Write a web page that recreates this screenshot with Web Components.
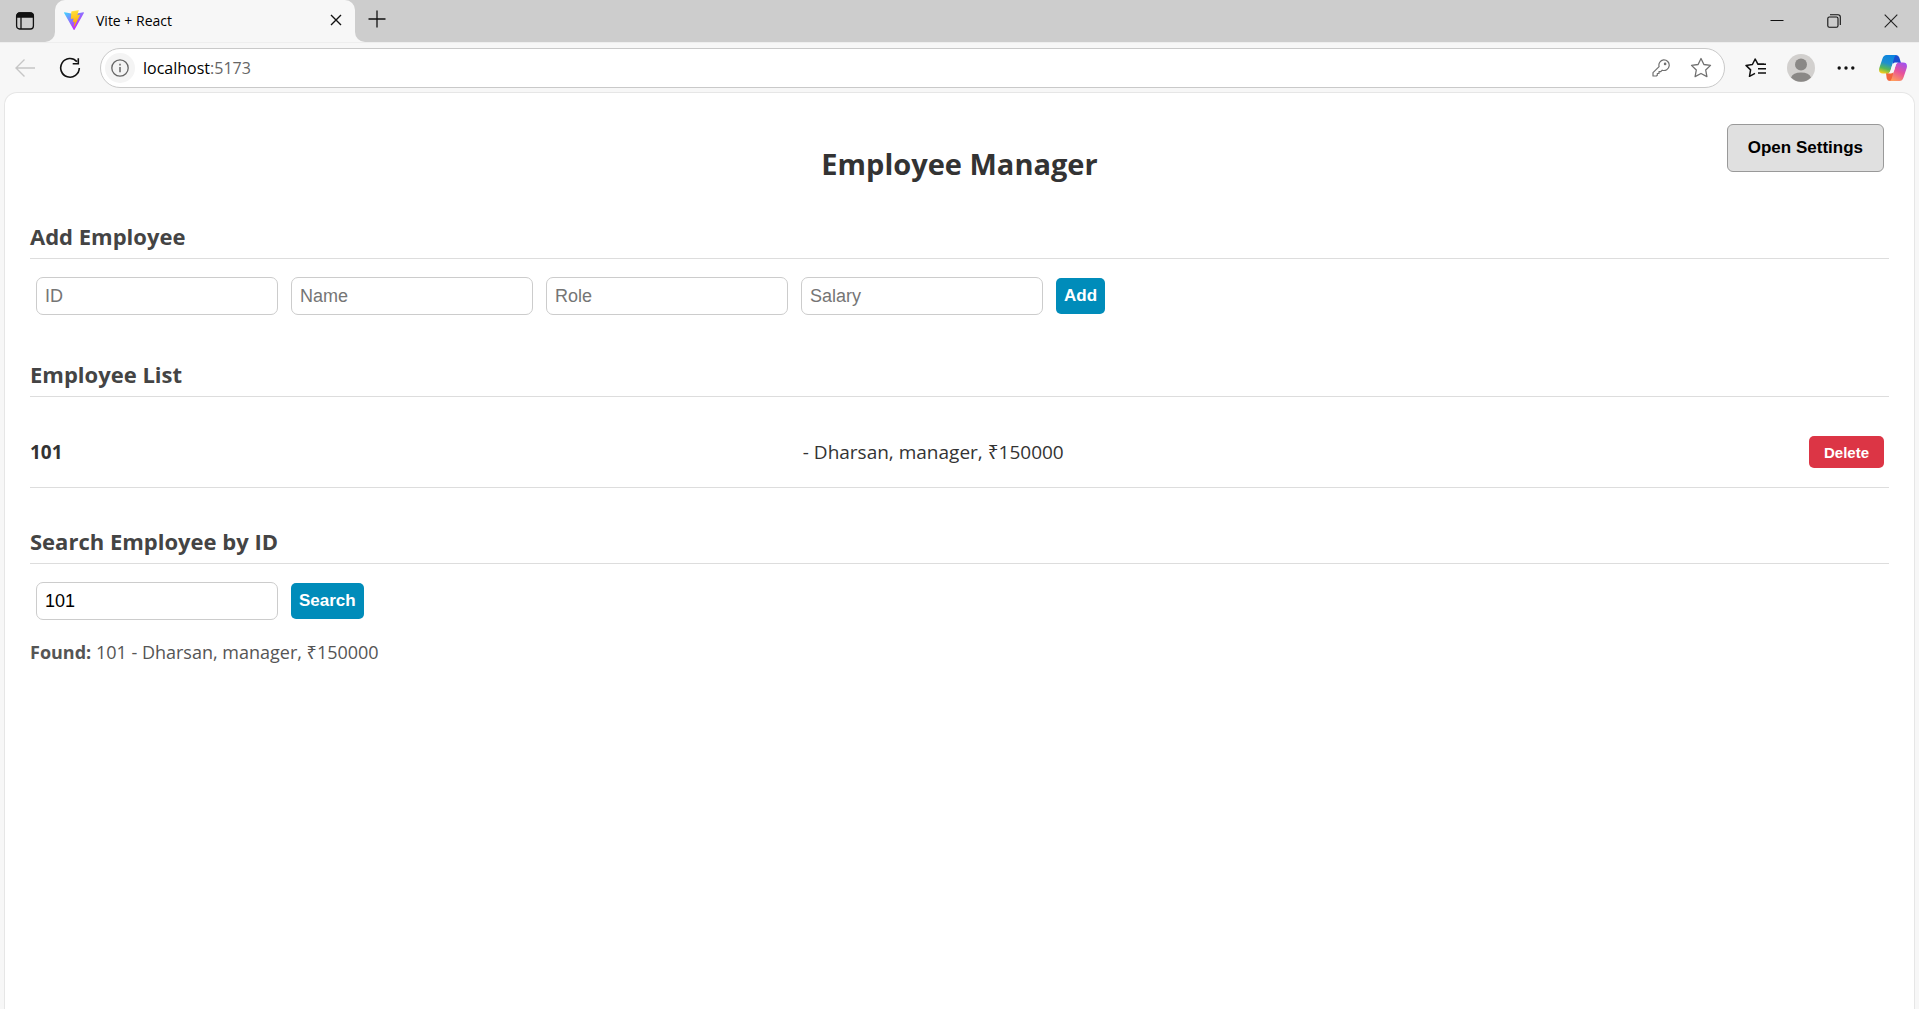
<!DOCTYPE html>
<html lang="en">
<head>
<meta charset="utf-8">
<title>Vite + React</title>
<style>
  html, body { height: 100%; margin: 0; }
  body { font-family: "Open Sans", "Noto Sans", sans-serif; color: #333; background: #f7f7f7; }
</style>
</head>
<body>
<browser-window>
  <browser-tab slot="tab">Vite + React</browser-tab>
  <address-bar slot="toolbar" host="localhost" port=":5173"></address-bar>
  <employee-app></employee-app>
</browser-window>

<script>
const define = (name, html) => {
  const template = document.createElement('template');
  template.innerHTML = html;
  customElements.define(name, class extends HTMLElement {
    constructor() {
      super();
      this.attachShadow({ mode: 'open' }).append(template.content.cloneNode(true));
    }
    connectedCallback() {
      this.shadowRoot.querySelectorAll('[data-attr]').forEach(el => {
        el.textContent = this.getAttribute(el.dataset.attr) ?? '';
      });
      const input = this.shadowRoot.querySelector('input[data-field]');
      if (input) {
        input.placeholder = this.getAttribute('label') || '';
        input.setAttribute('aria-label', this.getAttribute('label') || '');
        input.value = this.getAttribute('value') || '';
      }
    }
  });
};

const iconButton = `
  button { border: 0; padding: 0; margin: 0; background: none; color: inherit; font: inherit;
    display: flex; align-items: center; justify-content: center; flex: none; }
  svg { display: block; }`;

define('browser-window', `
<style>
  :host { display: flex; flex-direction: column; min-height: 100vh; background: #f7f7f7; color: #000; }
  ${iconButton}
  .strip { display: flex; height: 42px; }
  .lead { width: 55px; background: #cdcdcd; border-bottom-right-radius: 10px; display: flex; justify-content: center; align-items: center; box-sizing: border-box; padding-right: 5px; }
  .rest { flex: 1; background: #cdcdcd; border-bottom-left-radius: 10px; display: flex; justify-content: space-between; }
  .rest > button { width: 44px; height: 38px; }
  .controls { display: flex; }
  .controls button { width: 57px; height: 42px; }
  .page { flex: 1; margin: 0 4px; border: 1px solid #e6e6e6; border-bottom: 0; border-radius: 13px 13px 0 0; background: #fff; }
</style>
<div class="strip">
  <div class="lead"><button aria-label="Tab actions">
    <svg width="20" height="20" viewBox="0 0 20 20" fill="none" stroke="#111" stroke-width="1.3"><rect x="1.6" y="2" width="16.8" height="16" rx="3"/><path d="M2 6V5q0-3 3-3h10q3 0 3 3v1z" fill="#111"/><path d="M6 6v12"/></svg>
  </button></div>
  <slot name="tab"></slot>
  <div class="rest">
    <button aria-label="New tab"><svg width="18" height="18" viewBox="0 0 18 18" stroke="#111" stroke-width="1.3"><path d="M9 0.500v17M0.500 9h17"/></svg></button>
    <div class="controls">
      <button aria-label="Minimize"><svg width="14" height="14" viewBox="0 0 14 14" stroke="#111"><path d="M.5 6.500h13"/></svg></button>
      <button aria-label="Restore"><svg width="14" height="14" viewBox="0 0 14 14" fill="none" stroke="#111" stroke-width="1.1"><rect x=".8" y="3" width="10.200" height="10.200" rx="1.5"/><path d="M3 .8h8q2.300 0 2.300 2.300V11"/></svg></button>
      <button aria-label="Close"><svg width="14" height="14" viewBox="0 0 14 14" stroke="#222" stroke-width="1.1"><path d="M.7.700l12.600 12.600M13.300.700L.7 13.300"/></svg></button>
    </div>
  </div>
</div>
<slot name="toolbar"></slot>
<div class="page"><slot></slot></div>`);

define('browser-tab', `
<style>
  :host { display: block; width: 300px; background: linear-gradient(#cdcdcd 50%, #f7f7f7 50%); }
  ${iconButton}
  .tab { display: flex; align-items: center; height: 42px; box-sizing: border-box; padding: 0 9px 2px 9px; background: #f7f7f7; border-radius: 10px 10px 0 0; font-size: 14px; }
  .name { flex: 1; margin-left: 12px; }
  button { width: 20px; height: 20px; }
</style>
<div class="tab">
  <svg width="20" height="20" viewBox="0 0 256 257">
    <defs>
      <linearGradient id="a" x1="-.8%" x2="57.600%" y1="7.600%" y2="78.400%"><stop offset="0" stop-color="#41D1FF"/><stop offset="1" stop-color="#BD34FE"/></linearGradient>
      <linearGradient id="b" x1="43.400%" x2="50.300%" y1="2.200%" y2="89%"><stop offset="0" stop-color="#FFEA83"/><stop offset=".083" stop-color="#FFDD35"/><stop offset="1" stop-color="#FFA800"/></linearGradient>
    </defs>
    <path fill="url(#a)" d="M255.153 37.938L134.897 252.976c-2.483 4.440-8.862 4.466-11.382.048L.875 37.958c-2.746-4.814 1.371-10.646 6.827-9.670l120.385 21.517a6.537 6.537 0 0 0 2.322-.004l117.867-21.483c5.438-.991 9.574 4.796 6.877 9.620Z"/>
    <path fill="url(#b)" d="M185.432.063L96.440 17.501a3.268 3.268 0 0 0-2.634 3.014l-5.474 92.456a3.268 3.268 0 0 0 3.997 3.378l24.777-5.718c2.318-.535 4.413 1.507 3.936 3.838l-7.361 36.047c-.495 2.426 1.782 4.500 4.151 3.780l15.304-4.649c2.372-.720 4.652 1.360 4.150 3.788l-11.698 56.621c-.732 3.542 3.979 5.473 5.943 2.437l1.313-2.028l72.516-144.720c1.215-2.423-.880-5.186-3.540-4.672l-25.505 4.922c-2.396.462-4.435-1.770-3.759-4.114l16.646-57.705c.677-2.350-1.370-4.583-3.769-4.113Z"/>
  </svg>
  <span class="name"><slot></slot></span>
  <button aria-label="Close tab"><svg width="12" height="12" viewBox="0 0 12 12" stroke="#111" stroke-width="1.4"><path d="M1 1l10 10M11 1L1 11"/></svg></button>
</div>`);

define('address-bar', `
<style>
  :host { display: flex; align-items: center; height: 50px; border-top: 1px solid #eee; box-sizing: border-box; padding: 0 12px 0 10px; }
  ${iconButton}
  .back { width: 30px; margin-right: 15px; }
  .reload { width: 30px; margin-right: 15px; }
  .field { flex: 1; height: 40px; box-sizing: border-box; display: flex; align-items: center; padding: 0 12px 0 4px; border: 1px solid #c9c9c9; border-radius: 20px; background: #fff; }
  .info { width: 30px; height: 30px; border-radius: 50%; background: #f4f4f4; }
  .url { flex: 1; margin-left: 8px; font-size: 16px; }
  .url span + span { color: #666; }
  .key { width: 20px; margin-right: 19px; }
  .tools { display: flex; align-items: center; margin-left: 8px; }
  .tools button { width: 45px; }
  .tools button.copilot { width: 28px; margin-left: 11px; }
</style>
<button class="back" aria-label="Back"><svg width="20" height="18" viewBox="0 0 20 18" fill="none" stroke="#c6c6c6" stroke-width="1.4"><path d="M9.500.500L1 9l8.500 8.500M1 9h19"/></svg></button>
<button class="reload" aria-label="Reload"><svg width="22" height="22" viewBox="0 0 22 22" fill="none" stroke="#111" stroke-width="1.6"><path d="M17.900 4.600A9.300 9.300 0 1 0 20.300 11M19.300 1.200v5.600h-5.600"/></svg></button>
<div class="field">
  <button class="info" aria-label="Site information"><svg width="18" height="18" viewBox="0 0 18 18" fill="none" stroke="#666" stroke-width="1.300"><circle cx="9" cy="9" r="8.200"/><path d="M9 8v5.200M9 4.800v1.600" stroke-width="1.500"/></svg></button>
  <div class="url"><span data-attr="host"></span><span data-attr="port"></span></div>
  <button class="key" aria-label="Passwords"><svg width="18" height="18" viewBox="0 0 18 18" fill="none" stroke="#707070" stroke-width="1.200" stroke-linejoin="round"><path d="M11.500.9a5.300 5.300 0 1 1-1.300 10.300L8.800 12.600H7v1.900H5.300v1.700L4.400 17H1v-3.400l6.100-6A5.300 5.300 0 0 1 11.500.9z"/><circle cx="13.100" cy="4.900" r=".7"/></svg></button>
  <button aria-label="Favourite"><svg width="22" height="22" viewBox="0 0 22 22" fill="none" stroke="#707070" stroke-width="1.300" stroke-linejoin="round"><path d="M11 1.500l2.900 6 6.600.9-4.800 4.600 1.200 6.600L11 16.500l-5.900 3.100 1.200-6.600L1.500 8.400l6.600-.9z"/></svg></button>
</div>
<div class="tools">
  <button aria-label="Favourites list"><svg width="21" height="20" viewBox="0 0 21 20" fill="none" stroke="#111" stroke-width="1.500" stroke-linejoin="round"><path d="M19 6.300h-6L10.200 1 7.400 6.500 1 7.400l4.600 4.500-1.100 6.400 5.500-2.900"/><path d="M13 6.300h8M13 10.700h8M13 15h8"/></svg></button>
  <button aria-label="Profile"><svg width="28" height="28" viewBox="0 0 28 28"><circle cx="14" cy="14" r="14" fill="#d2d0ce"/><circle cx="14" cy="10.500" r="6" fill="#8a8886"/><path d="M4 23.500q2-5 10-5t10 5a14 14 0 0 1-20 0z" fill="#8a8886"/></svg></button>
  <button aria-label="More"><svg width="18" height="4" viewBox="0 0 18 4" fill="#111"><circle cx="2.200" cy="2" r="1.700"/><circle cx="9" cy="2" r="1.700"/><circle cx="15.800" cy="2" r="1.700"/></svg></button>
  <button class="copilot" aria-label="Copilot"><svg width="28" height="26" viewBox="0 0 28 26">
    <defs>
      <linearGradient id="c" x1=".6" y1="0" x2=".3" y2="1"><stop offset="0" stop-color="#0a84e0"/><stop offset=".45" stop-color="#1f8fd0"/><stop offset=".75" stop-color="#58b856"/><stop offset="1" stop-color="#f2cc1d"/></linearGradient>
      <linearGradient id="d" x1=".8" y1="0" x2=".3" y2="1"><stop offset="0" stop-color="#a052f0"/><stop offset=".5" stop-color="#e8529a"/><stop offset="1" stop-color="#ff9d5c"/></linearGradient>
    </defs>
    <path fill="#1b4fd0" d="M13 0h4q2.500 0 3.300 2.500L22 8h-4q-3 0-4 3z"/>
    <path fill="#f2643c" d="M7 18h3q3 0 4-3l1 11h-4q-2.500 0-3.300-2.500z"/>
    <path fill="url(#c)" d="M7.500 0H18q-2 0-2.700 2.500L11.500 15.500Q10.700 18.500 8 18.500H4q-5 0-3.700-5.500L3.500 3.500Q4.600 0 7.500 0z"/>
    <path fill="url(#d)" d="M20.500 26H10q2 0 2.700-2.500L16.500 10.500q.8-3 3.500-3h4q5 0 3.700 5.500l-3.200 9.500Q23.400 26 20.500 26z"/>
    <path fill="#f7f7f7" d="M15.800 7.500H20q-2.500 0-3.300 3l-1.500 5q-.9 3-3.400 3H8.500q2.300-.2 3.100-3l1.500-5q.7-2.600 2.700-3z"/>
  </svg></button>
</div>`);

define('text-field', `
<style>
  :host { display: block; width: 242px; }
  input { display: block; width: 100%; height: 38px; box-sizing: border-box; margin: 0; padding: 0 8px; border: 1px solid #ccc; border-radius: 7px; background: #fff; color: #000; font: 18px "Liberation Sans", Arial, sans-serif; }
  input::placeholder { color: #757575; opacity: 1; }
</style>
<input type="text" data-field>`);

define('action-button', `
<style>
  :host { display: block; --bg: #008cba; --fg: #fff; --pad: 8px; --height: 36px; --size: 17px; --line: transparent; --radius: 5px; }
  :host([kind="danger"]) { --bg: #dc3545; --pad: 15px; --height: 32px; --size: 15px; }
  :host([kind="plain"]) { --bg: #e0e0e0; --fg: #000; --pad: 21px; --height: 48px; --line: #999; --radius: 6px; }
  button { display: block; height: var(--height); margin: 0; padding: 0 calc(var(--pad) - 1px); border: 1px solid var(--line); border-radius: var(--radius); background: var(--bg) border-box; color: var(--fg); font: bold var(--size) "Liberation Sans", Arial, sans-serif; }
</style>
<button type="button"><slot></slot></button>`);

define('page-section', `
<style>
  :host { display: block; }
  h3 { margin: 0; padding-bottom: 6px; border-bottom: 1px solid #ddd; font-size: 22px; line-height: 31px; color: #444; }
</style>
<h3 data-attr="heading"></h3>
<slot></slot>`);

define('employee-row', `
<style>
  :host { display: flex; align-items: center; justify-content: space-between; margin-top: 20px; height: 70px; border-bottom: 1px solid #ddd; font-size: 19px; }
  action-button { margin: 0 5px; }
</style>
<strong data-attr="number"></strong>
<span><slot></slot></span>
<action-button kind="danger">Delete</action-button>`);

define('employee-app', `
<style>
  :host { display: block; padding: 31px 25px; color: #333; }
  header { display: grid; grid-template-columns: 1fr auto 1fr; height: 60px; margin-bottom: 37px; }
  h2 { grid-column: 2; margin: 20px 0 0; font-size: 29px; line-height: 40px; }
  header action-button { justify-self: end; margin-right: 5px; }
  page-section + page-section { margin-top: 44px; }
  page-section.search { margin-top: 38px; }
  form { display: flex; align-items: center; gap: 13px; margin: 18px 6px 0; }
  p { margin: 19px 0 0; font-size: 18px; line-height: 26px; color: #555; }
</style>
<header>
  <h2>Employee Manager</h2>
  <action-button kind="plain">Open Settings</action-button>
</header>
<page-section heading="Add Employee">
  <form>
    <text-field label="ID"></text-field>
    <text-field label="Name"></text-field>
    <text-field label="Role"></text-field>
    <text-field label="Salary"></text-field>
    <action-button>Add</action-button>
  </form>
</page-section>
<page-section heading="Employee List">
  <employee-row number="101">- Dharsan, manager, ₹150000</employee-row>
</page-section>
<page-section class="search" heading="Search Employee by ID">
  <form>
    <text-field label="Enter ID" value="101"></text-field>
    <action-button>Search</action-button>
  </form>
  <p><strong>Found:</strong> 101 - Dharsan, manager, ₹150000</p>
</page-section>`);
</script>
</body>
</html>
